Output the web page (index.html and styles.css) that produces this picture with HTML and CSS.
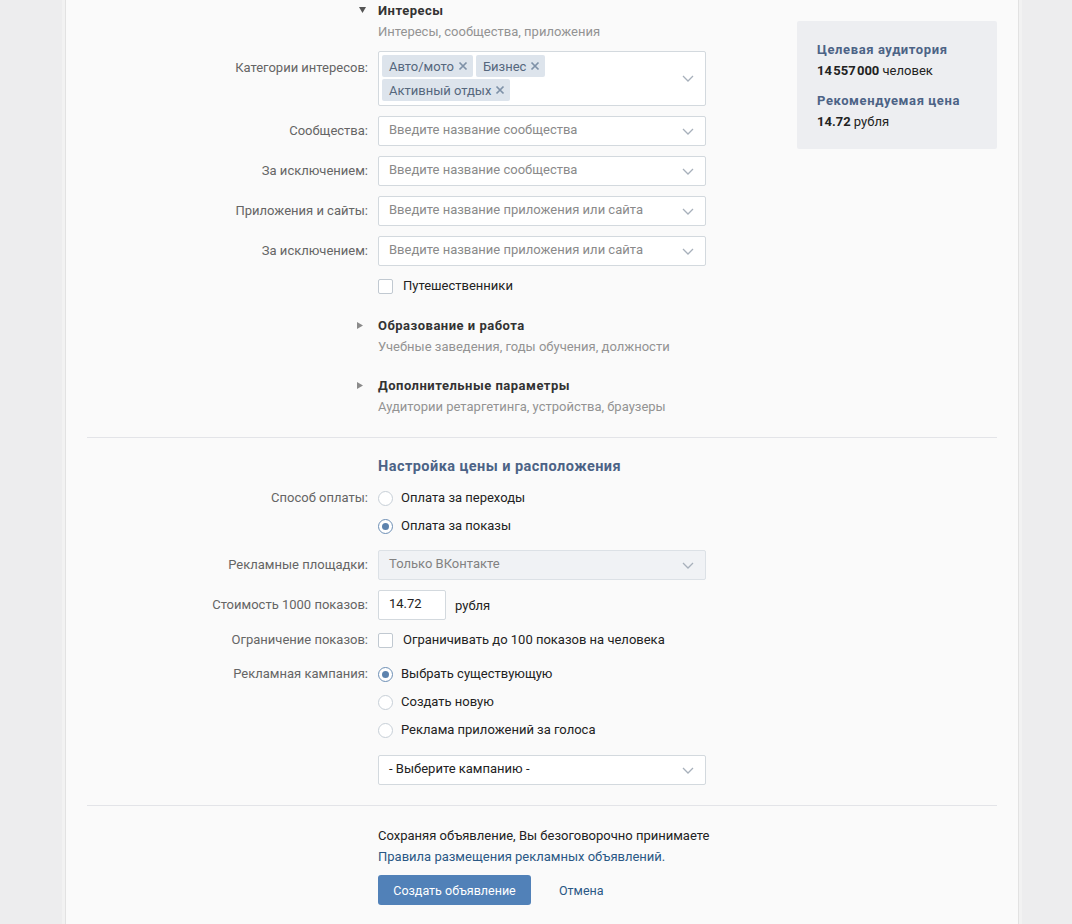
FILE: index.html
```html
<!DOCTYPE html>
<html lang="ru">
<head>
<meta charset="utf-8">
<title>Создание объявления</title>
<link rel="stylesheet" href="styles.css">
</head>
<body>
<div class="panel">
  <div class="top">
    <div class="form">
      <div class="grid shead shead-first">
        <span class="tri"><svg class="tri-down" viewBox="0 0 7 6"><path d="M0 0h7L3.5 6z"/></svg></span>
        <div>
          <div class="stitle">Интересы</div>
          <div class="ssub">Интересы, сообщества, приложения</div>
        </div>
      </div>

      <div class="grid row cat-row">
        <div class="lbl lbl-cat">Категории интересов:</div>
        <div class="tagbox">
          <div class="tags">
            <span class="tag">Авто/мото<svg class="x" viewBox="0 0 10 10"><path d="M1.5 1.5l7 7M8.5 1.5l-7 7"/></svg></span>
            <span class="tag">Бизнес<svg class="x" viewBox="0 0 10 10"><path d="M1.5 1.5l7 7M8.5 1.5l-7 7"/></svg></span>
            <span class="tag">Активный отдых<svg class="x" viewBox="0 0 10 10"><path d="M1.5 1.5l7 7M8.5 1.5l-7 7"/></svg></span>
          </div>
          <svg class="chev" viewBox="0 0 12 7"><path d="M1 1l5 5 5-5"/></svg>
        </div>
      </div>

      <div class="grid row">
        <div class="lbl">Сообщества:</div>
        <div class="select"><span class="ph">Введите название сообщества</span><svg class="chev" viewBox="0 0 12 7"><path d="M1 1l5 5 5-5"/></svg></div>
      </div>
      <div class="grid row">
        <div class="lbl">За исключением:</div>
        <div class="select"><span class="ph">Введите название сообщества</span><svg class="chev" viewBox="0 0 12 7"><path d="M1 1l5 5 5-5"/></svg></div>
      </div>
      <div class="grid row">
        <div class="lbl">Приложения и сайты:</div>
        <div class="select"><span class="ph">Введите название приложения или сайта</span><svg class="chev" viewBox="0 0 12 7"><path d="M1 1l5 5 5-5"/></svg></div>
      </div>
      <div class="grid row">
        <div class="lbl">За исключением:</div>
        <div class="select"><span class="ph">Введите название приложения или сайта</span><svg class="chev" viewBox="0 0 12 7"><path d="M1 1l5 5 5-5"/></svg></div>
      </div>

      <div class="grid row-check travel-row">
        <div></div>
        <label class="check"><span class="cbox"></span><span>Путешественники</span></label>
      </div>

      <div class="grid shead shead-collapsed">
        <span class="tri"><svg class="tri-right" viewBox="0 0 6 7"><path d="M0 0l6 3.5L0 7z"/></svg></span>
        <div>
          <div class="stitle">Образование и работа</div>
          <div class="ssub">Учебные заведения, годы обучения, должности</div>
        </div>
      </div>
      <div class="grid shead shead-collapsed2">
        <span class="tri"><svg class="tri-right" viewBox="0 0 6 7"><path d="M0 0l6 3.5L0 7z"/></svg></span>
        <div>
          <div class="stitle">Дополнительные параметры</div>
          <div class="ssub">Аудитории ретаргетинга, устройства, браузеры</div>
        </div>
      </div>
    </div>

    <aside class="card">
      <div class="card-title">Целевая аудитория</div>
      <div class="card-val"><b>14&#8202;557&#8202;000</b> человек</div>
      <div class="card-title card-title2">Рекомендуемая цена</div>
      <div class="card-val"><b>14.72</b> рубля</div>
    </aside>
  </div>

  <div class="divider"></div>

  <div class="form">
    <div class="grid price-head">
      <div></div>
      <div class="price-title">Настройка цены и расположения</div>
    </div>

    <div class="grid row-radio pay-row">
      <div class="lbl lbl-line">Способ оплаты:</div>
      <div class="radios">
        <label class="radio"><span class="rcircle"></span><span>Оплата за переходы</span></label>
        <label class="radio"><span class="rcircle on"></span><span>Оплата за показы</span></label>
      </div>
    </div>

    <div class="grid row place-row">
      <div class="lbl">Рекламные площадки:</div>
      <div class="select disabled"><span class="val-dis">Только ВКонтакте</span><svg class="chev" viewBox="0 0 12 7"><path d="M1 1l5 5 5-5"/></svg></div>
    </div>

    <div class="grid row">
      <div class="lbl">Стоимость 1000 показов:</div>
      <div class="cost"><span class="cost-input">14.72</span><span class="unit">рубля</span></div>
    </div>

    <div class="grid row-check limit-row">
      <div class="lbl lbl-line">Ограничение показов:</div>
      <label class="check"><span class="cbox"></span><span>Ограничивать до 100 показов на человека</span></label>
    </div>

    <div class="grid row-radio camp-row">
      <div class="lbl lbl-line">Рекламная кампания:</div>
      <div class="radios">
        <label class="radio"><span class="rcircle on"></span><span>Выбрать существующую</span></label>
        <label class="radio"><span class="rcircle"></span><span>Создать новую</span></label>
        <label class="radio"><span class="rcircle"></span><span>Реклама приложений за голоса</span></label>
      </div>
    </div>

    <div class="grid row camp-select">
      <div></div>
      <div class="select"><span class="val">- Выберите кампанию -</span><svg class="chev" viewBox="0 0 12 7"><path d="M1 1l5 5 5-5"/></svg></div>
    </div>
  </div>

  <div class="divider divider2"></div>

  <div class="form">
    <div class="grid footer">
      <div></div>
      <div class="footer-body">
        <div class="terms">Сохраняя объявление, Вы безоговорочно принимаете</div>
        <div class="terms"><a class="link" href="#">Правила размещения рекламных объявлений</a><span class="dot">.</span></div>
        <div class="actions">
          <button class="btn" type="button">Создать объявление</button>
          <a class="cancel" href="#">Отмена</a>
        </div>
      </div>
    </div>
  </div>
</div>
</body>
</html>
```

FILE: styles.css
```css
* { box-sizing: border-box; }

html, body {
  margin: 0;
  padding: 0;
}

body {
  background: #ededee;
  font-family: Roboto, "Open Sans", "Liberation Sans", sans-serif;
  font-size: 13px;
  color: #222;
  height: 924px;
  overflow: hidden;
}

.panel {
  margin-left: 65px;
  width: 954px;
  min-height: 924px;
  background: #fafafa;
  border-left: 1px solid #e2e2e2;
  border-right: 1px solid #e2e2e2;
  box-shadow: -3px 0 0 #f2f2f2, 3px 0 0 #f2f2f2;
  padding: 0 21px 20px;
}

.top {
  display: flex;
  align-items: flex-start;
}

.form {
  width: 619px;
}

.grid {
  display: grid;
  grid-template-columns: 281px 328px;
  column-gap: 10px;
}

/* section headers */
.shead-first { padding-top: 1px; }
.shead .tri {
  display: flex;
  justify-content: flex-end;
  align-items: flex-start;
  padding-right: 2px;
  height: 20px;
}
.tri-down {
  width: 7px;
  height: 6px;
  margin-top: 6px;
  fill: #555;
}
.tri-right {
  width: 6px;
  height: 7px;
  margin-top: 6px;
  margin-right: 3px;
  fill: #8a8a8a;
}
.stitle {
  font-weight: 700;
  line-height: 20px;
  color: #333;
  letter-spacing: 0.5px;
}
.ssub {
  margin-top: 1px;
  line-height: 20px;
  color: #939393;
}
.shead-collapsed { margin-top: 20px; }
.shead-collapsed2 { margin-top: 19px; }

/* labels */
.lbl {
  text-align: right;
  color: #656565;
  line-height: 30px;
  white-space: nowrap;
}
.lbl-cat { line-height: 16px; padding-top: 9px; }
.lbl-line { line-height: 20px; }

.row { margin-top: 10px; }
.cat-row { margin-top: 9px; }

/* tag box */
.tagbox {
  position: relative;
  height: 55px;
  background: #fff;
  border: 1px solid #d3d9de;
  border-radius: 2px;
  padding: 3px 30px 4px 3px;
}
.tags {
  display: flex;
  flex-wrap: wrap;
  gap: 2px 3px;
}
.tag {
  display: inline-flex;
  align-items: center;
  height: 22px;
  padding: 0 5px 0 7px;
  background: #dde4ec;
  color: #55677d;
  border-radius: 2px;
}
.x {
  width: 10px;
  height: 10px;
  margin-left: 4px;
  fill: none;
  stroke: #7e91a7;
  stroke-width: 1.7;
}

/* selects */
.select {
  position: relative;
  height: 30px;
  background: #fff;
  border: 1px solid #d3d9de;
  border-radius: 2px;
  padding: 0 30px 0 10px;
  line-height: 26px;
}
.ph { color: #8a8a8a; }
.val { color: #222; }
.select.disabled {
  background: #f0f2f5;
  border-color: #dce1e6;
}
.val-dis { color: #828282; }

.chev {
  position: absolute;
  right: 11px;
  top: 50%;
  width: 12px;
  height: 7px;
  margin-top: -3px;
  fill: none;
  stroke: #a7b0bb;
  stroke-width: 1.3;
}
.tagbox .chev { top: 27px; margin-top: -4px; }

/* checkboxes */
.row-check { margin-top: 9px; }
.travel-row { margin-top: 10px; }
.check {
  display: flex;
  align-items: center;
  height: 20px;
  line-height: 20px;
}
.cbox {
  width: 15px;
  height: 15px;
  background: #fff;
  border: 1px solid #c1c9d1;
  border-radius: 2px;
  margin-right: 10px;
  flex: none;
}

/* divider */
.divider {
  height: 1px;
  background: #e3e4e8;
  margin-top: 20px;
}
.divider2 { margin-top: 20px; }

/* price section */
.price-head { margin-top: 19px; }
.price-title {
  font-size: 14.5px;
  font-weight: 700;
  line-height: 20px;
  color: #4c6386;
  letter-spacing: 0.45px;
  white-space: nowrap;
}
.pay-row { margin-top: 11px; }
.radios {
  display: flex;
  flex-direction: column;
  gap: 8px;
}
.radio {
  display: flex;
  align-items: center;
  height: 20px;
  line-height: 20px;
}
.rcircle {
  position: relative;
  width: 15px;
  height: 15px;
  border-radius: 50%;
  border: 1px solid #c7cfd7;
  background: #fff;
  margin-right: 8px;
  flex: none;
}
.rcircle.on { border-color: #6d8fb5; }
.rcircle.on::after {
  content: "";
  position: absolute;
  left: 3px;
  top: 3px;
  width: 7px;
  height: 7px;
  border-radius: 50%;
  background: #5d83ae;
}

.place-row { margin-top: 14px; }

.cost {
  display: flex;
  align-items: center;
}
.cost-input {
  width: 68px;
  height: 30px;
  background: #fff;
  border: 1px solid #d3d9de;
  border-radius: 2px;
  padding-left: 10px;
  line-height: 26px;
  color: #222;
}
.unit { margin-left: 9px; }

.limit-row { margin-top: 10px; }
.camp-row { margin-top: 14px; }
.camp-select { margin-top: 15px; }

/* footer */
.footer { margin-top: 19px; }
.footer-body { white-space: nowrap; }
.terms { line-height: 21px; color: #222; }
.link {
  color: #2a5885;
  text-decoration: none;
}
.dot { color: #2a5885; }
.actions {
  display: flex;
  align-items: center;
  margin-top: 8px;
}
.btn {
  height: 30px;
  width: 153px;
  border: 0;
  border-radius: 3px;
  background: #5181b8;
  color: #fff;
  font-family: inherit;
  font-size: 12.5px;
  padding: 0;
  cursor: pointer;
}
.cancel {
  margin-left: 28px;
  color: #2a5885;
  text-decoration: none;
  font-size: 12.5px;
}

/* right card */
.card {
  margin-left: 91px;
  margin-top: 21px;
  width: 200px;
  height: 128px;
  background: #edeef1;
  border-radius: 2px;
  padding: 18px 20px 0;
}
.card-title {
  font-weight: 700;
  line-height: 21px;
  color: #4c6386;
  letter-spacing: 0.6px;
}
.card-title2 { margin-top: 9px; }
.card-val { line-height: 21px; color: #222; }
.card-val b { font-weight: 700; }
```
